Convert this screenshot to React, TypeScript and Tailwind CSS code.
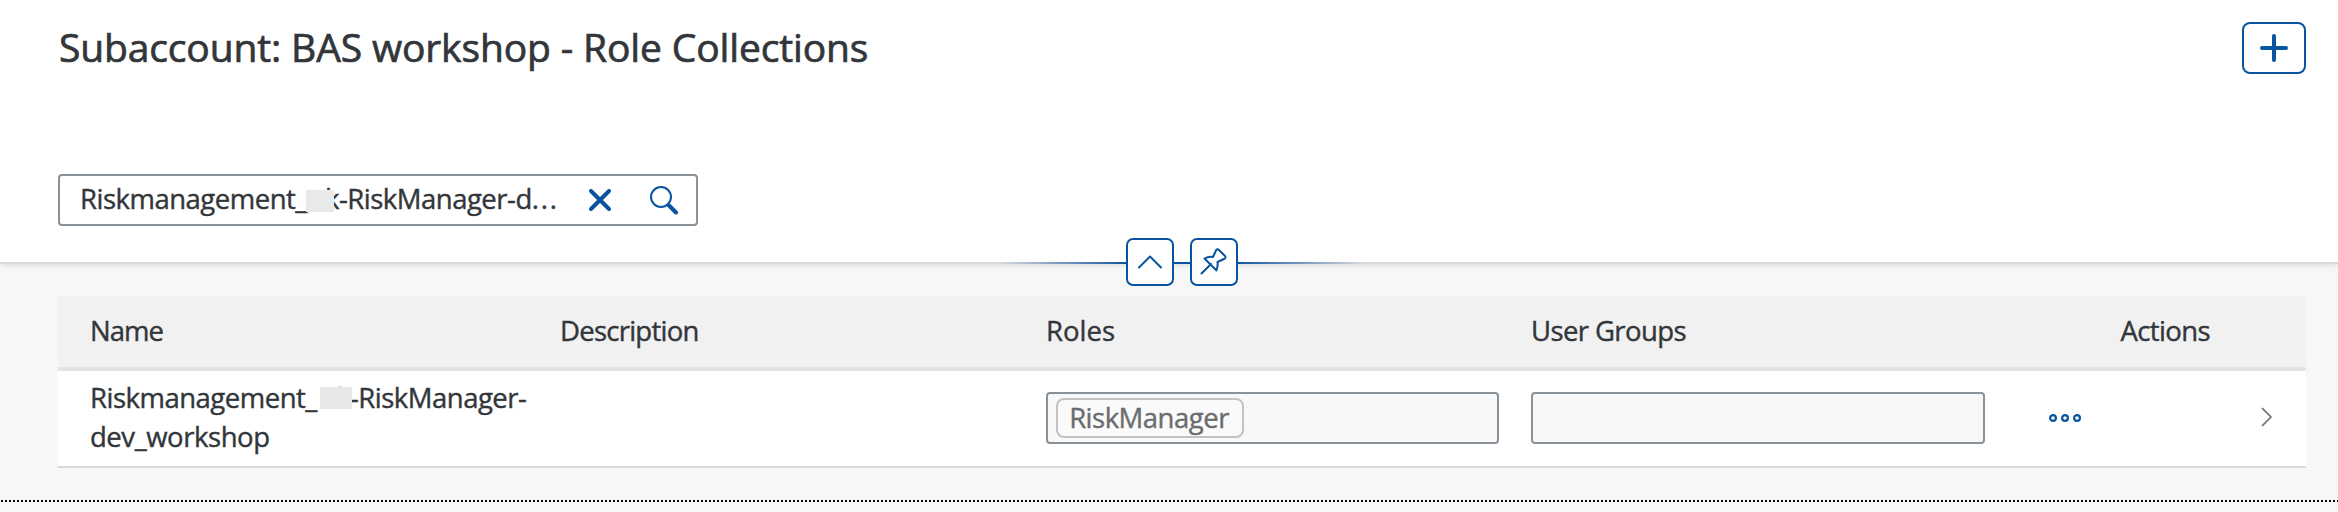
import type { ReactNode } from "react";

function Masked({ prefix, suffix, prefixClass, boxClass }: { prefix: string; suffix: ReactNode; prefixClass: string; boxClass: string }) {
  return (
    <span className="relative flex whitespace-nowrap">
      <span className={prefixClass}>{prefix}</span>
      <span>{suffix}</span>
      <span className={boxClass} />
    </span>
  );
}

function HeaderCell({ children, className }: { children?: ReactNode; className: string }) {
  return <div className={className}>{children}</div>;
}

function AnchorButton({ children, label }: { children: ReactNode; label: string }) {
  return (
    <button aria-label={label} className="flex size-12 items-center justify-center rounded-[7px] border-2 border-[#0854a0] bg-white">
      {children}
    </button>
  );
}

export default function App() {
  return (
    <div className="flex h-[512px] w-[2338px] flex-col overflow-hidden bg-[#f7f7f7] font-['Open_Sans','Noto_Sans',sans-serif] text-[27.5px] tracking-[-0.5px] text-[#32363a] [-webkit-text-stroke:0.4px]">
      <header className="relative flex h-[264px] shrink-0 flex-col border-b-2 border-[#d9d9d9] bg-white pr-8 pl-[58px] shadow-[0_1px_6px_rgba(0,0,0,0.12)]">
        <div className="flex items-start justify-between pt-[22px]">
          <h1 className="pl-px text-[39px] leading-[50px] tracking-[-0.14px] whitespace-nowrap [-webkit-text-stroke:0.7px]">Subaccount: BAS workshop - Role Collections</h1>
          <button aria-label="Add" className="flex h-[52px] w-16 items-center justify-center rounded-[8px] border-2 border-[#0854a0]">
            <svg width="28" height="28" viewBox="0 0 28 28" fill="none" stroke="#0854a0" strokeWidth="4" strokeLinecap="round">
              <path d="M14 2v24M2 14h24" />
            </svg>
          </button>
        </div>
        <div className="mt-[100px] flex h-[52px] w-[640px] items-center rounded-[4px] border-2 border-[#89919a] pl-5">
          <div className="w-[509px] pb-[2px] leading-[46px]">
            <Masked
              prefix="Riskmanagement_"
              suffix={<>k-RiskManager-d<span className="tracking-[1.8px]">...</span></>}
              prefixClass="w-[245px]"
              boxClass="absolute top-[14px] left-[226px] h-[22px] w-7 bg-[#e8e9e9]"
            />
          </div>
          <svg className="block" width="22" height="22" viewBox="0 0 22 22" fill="none" stroke="#0854a0" strokeWidth="4" strokeLinecap="round">
            <path d="M2 2l18 18M20 2L2 20" />
          </svg>
          <svg className="ml-[38px] block" width="30" height="30" viewBox="0 0 30 30" fill="none" stroke="#0854a0" strokeLinecap="round">
            <circle cx="12" cy="12" r="10" strokeWidth="2" />
            <path d="M20 20.5l7 7" strokeWidth="4" />
          </svg>
        </div>
        <div className="absolute top-[238px] left-[1000px] flex h-12 w-[364px] items-center justify-center gap-4">
          <div className="absolute top-6 left-0 flex h-[2px] w-full">
            <div className="w-[126px] bg-linear-to-r from-[#d9d9d9] to-[#0854a0]" />
            <div className="flex-1 bg-[#0854a0]" />
            <div className="w-[126px] bg-linear-to-l from-[#d9d9d9] to-[#0854a0]" />
          </div>
          <div className="relative flex gap-4">
            <AnchorButton label="Collapse header">
              <svg width="26" height="14" viewBox="0 0 26 14" fill="none" stroke="#0854a0" strokeWidth="2" strokeLinecap="round" strokeLinejoin="round">
                <path d="M2 12.500L13 1.500L24 12.500" />
              </svg>
            </AnchorButton>
            <AnchorButton label="Pin header">
              <svg className="-translate-x-px -translate-y-px" width="28" height="28" viewBox="0 0 28 28" fill="none" stroke="#0854a0" strokeWidth="2" strokeLinecap="round" strokeLinejoin="round">
                <path d="M2.500 26.500L12 17M5.500 11.500C8.500 9.800 11 9.500 14 10L17 3.500Q18 1.300 20 3L26 9Q27.500 11 25 12L18.500 15C19 18 18.500 20.500 17.500 23.500Z" />
              </svg>
            </AnchorButton>
          </div>
        </div>
      </header>

      <main className="mt-8 ml-[58px] w-[2248px]">
        <div className="flex h-[75px] border-b-4 border-[#e4e4e4] bg-[#f1f1f1] pl-8 leading-[70px]">
          <HeaderCell className="w-[470px] tracking-[-1px]">Name</HeaderCell>
          <HeaderCell className="w-[486px] tracking-[-0.75px]">Description</HeaderCell>
          <HeaderCell className="w-[485px] tracking-normal">Roles</HeaderCell>
          <HeaderCell className="w-[486px] tracking-[-0.6px]">User Groups</HeaderCell>
          <HeaderCell className="w-[193px] text-right tracking-[-0.6px]">Actions</HeaderCell>
        </div>
        <div className="flex h-[97px] items-center border-b-2 border-[#d9d9d9] bg-white pb-px pl-8">
          <div className="w-[956px] pb-[3px] leading-[39px]">
            <Masked
              prefix="Riskmanagement_"
              suffix="k-RiskManager-"
              prefixClass="w-[246px]"
              boxClass="absolute top-[9px] left-[230px] h-[22px] w-8 bg-[#e8e8e8]"
            />
            <div className="tracking-[-0.45px]">dev_workshop</div>
          </div>
          <div className="mr-8 flex h-[52px] w-[453px] items-center rounded-[4px] border-2 border-[#89919a] bg-[#f8f8f8] pl-2">
            <span className="flex h-10 w-[188px] items-center justify-center rounded-[8px] border-2 border-[#c2c2c2] bg-[#fafafa] pr-[2px] pb-px leading-9 text-[#6a6d70]">RiskManager</span>
          </div>
          <div className="h-[52px] w-[454px] rounded-[4px] border-2 border-[#89919a] bg-[#f7f7f7]" />
          <svg className="ml-16 block" width="32" height="8" viewBox="0 0 32 8" fill="none" stroke="#0854a0" strokeWidth="2.200">
            <circle cx="4" cy="4" r="2.900" />
            <circle cx="16" cy="4" r="2.900" />
            <circle cx="28" cy="4" r="2.900" />
          </svg>
          <svg className="mb-[3px] ml-[180px] block" width="11" height="20" viewBox="0 0 11 20" fill="none" stroke="#6a6d70" strokeWidth="1.700" strokeLinecap="round" strokeLinejoin="round">
            <path d="M1.500 1.500L10 10L1.500 18.500" />
          </svg>
        </div>
      </main>
      <div className="mt-8 h-[2px] bg-[repeating-linear-gradient(90deg,transparent_0,transparent_1px,#000_1px,#000_3px,transparent_3px,transparent_4px)]" />
    </div>
  );
}
